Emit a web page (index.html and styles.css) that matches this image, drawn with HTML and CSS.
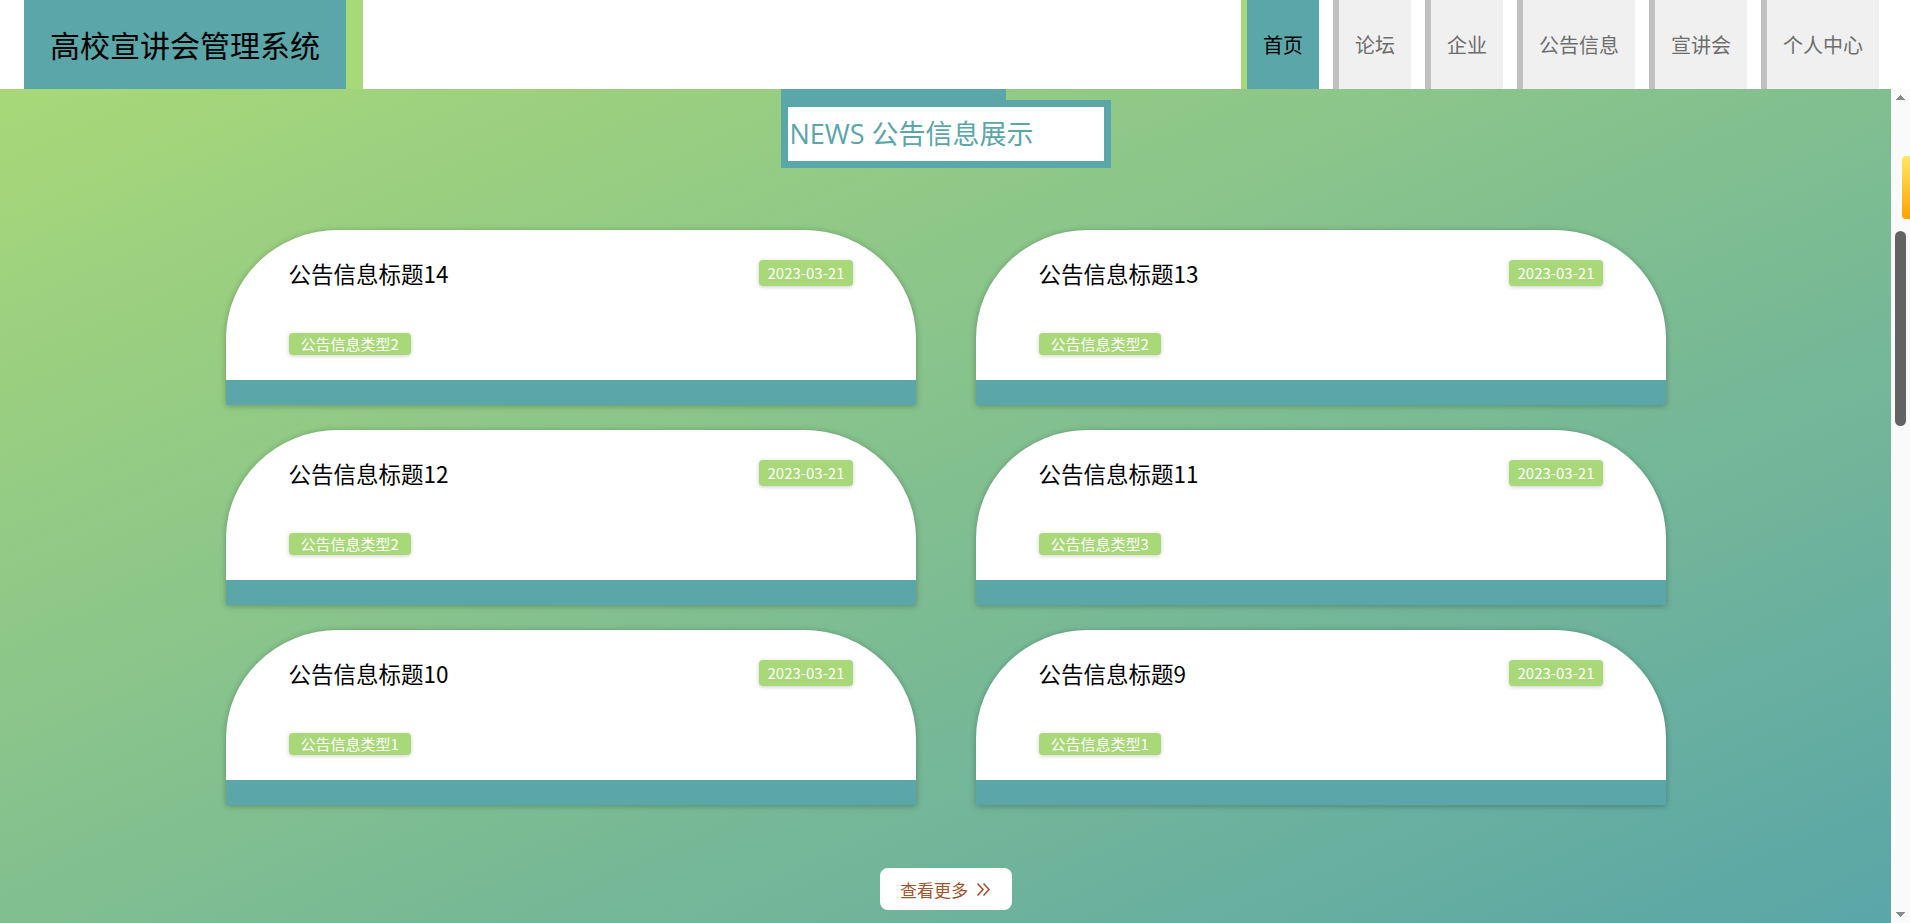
FILE: index.html
```html
<!DOCTYPE html>
<html lang="zh-CN">
  <head>
    <meta charset="UTF-8" />
    <meta name="viewport" content="width=device-width, initial-scale=1.0" />
    <title>高校宣讲会管理系统</title>
    <link rel="stylesheet" href="styles.css">
  </head>
  <body>
    <div class="app">
      <header class="topbar">
        <div class="logo">高校宣讲会管理系统</div>
        <nav class="menu">
          <a class="menu-item active" href="#">首页</a>
          <a class="menu-item" href="#">论坛</a>
          <a class="menu-item" href="#">企业</a>
          <a class="menu-item" href="#">公告信息</a>
          <a class="menu-item" href="#">宣讲会</a>
          <a class="menu-item" href="#">个人中心</a>
        </nav>
      </header>

      <div class="page-body">
        <main class="content">
          <section class="news">
            <div class="news-title">NEWS 公告信息展示</div>

            <div class="news-list">
              <div class="news-card">
                <div class="news-head">
                  <h3>公告信息标题14</h3>
                  <span class="news-date">2023-03-21</span>
                </div>
                <span class="news-type">公告信息类型2</span>
              </div>
              <div class="news-card">
                <div class="news-head">
                  <h3>公告信息标题13</h3>
                  <span class="news-date">2023-03-21</span>
                </div>
                <span class="news-type">公告信息类型2</span>
              </div>
              <div class="news-card">
                <div class="news-head">
                  <h3>公告信息标题12</h3>
                  <span class="news-date">2023-03-21</span>
                </div>
                <span class="news-type">公告信息类型2</span>
              </div>
              <div class="news-card">
                <div class="news-head">
                  <h3>公告信息标题11</h3>
                  <span class="news-date">2023-03-21</span>
                </div>
                <span class="news-type">公告信息类型3</span>
              </div>
              <div class="news-card">
                <div class="news-head">
                  <h3>公告信息标题10</h3>
                  <span class="news-date">2023-03-21</span>
                </div>
                <span class="news-type">公告信息类型1</span>
              </div>
              <div class="news-card">
                <div class="news-head">
                  <h3>公告信息标题9</h3>
                  <span class="news-date">2023-03-21</span>
                </div>
                <span class="news-type">公告信息类型1</span>
              </div>
            </div>

            <div class="news-more">
              <button class="more-btn">
                查看更多
                <svg width="15" height="15" viewBox="0 0 15 15" fill="none" stroke="currentColor" stroke-width="1.6">
                  <path d="M1.5 1.5l5.5 6-5.5 6M7.5 1.5l5.5 6-5.5 6" />
                </svg>
              </button>
            </div>
          </section>
        </main>

        <!-- полоса прокрутки -->
        <div class="scrollbar">
          <span class="scroll-arrow up"></span>
          <span class="scroll-thumb"></span>
          <span class="scroll-arrow down"></span>
        </div>
      </div>

      <div class="side-tab"></div>
    </div>
  </body>
</html>
```

FILE: styles.css
```css
/* Общие стили */
* {
  margin: 0;
  padding: 0;
  box-sizing: border-box;
}

body {
  font-family: "Noto Sans CJK SC", "Noto Sans", sans-serif;
  background-color: #fff;
  overflow: hidden;
}

.app {
  display: flex;
  flex-direction: column;
  height: 100vh;
}

/* Шапка */
.topbar {
  flex: none;
  height: 89px;
  display: flex;
  justify-content: space-between;
  padding: 0 31px 0 24px;
  background-color: #fff;
}

.logo {
  height: 100%;
  padding: 0 26px;
  background-color: #5aa6a8;
  border-right: 17px solid #a8d878;
  color: #000;
  font-size: 30px;
  line-height: 89px;
}

.menu {
  display: flex;
  gap: 14px;
  height: 100%;
}

.menu-item {
  display: block;
  height: 100%;
  padding: 0 16px;
  background-color: #f0f0f0;
  border-left: 6px solid #c0c0c0;
  color: #6e6e6e;
  font-size: 20px;
  line-height: 89px;
  text-decoration: none;
}

.menu-item.active {
  background-color: #5aa6a8;
  border-left-color: #a8d878;
  color: #000;
}

/* Основная область */
.page-body {
  flex: 1;
  display: flex;
  min-height: 0;
}

.content {
  flex: 1;
  overflow: hidden;
  background: linear-gradient(to bottom right, #a8d878, #5aa6a8);
}

.scrollbar {
  flex: none;
  width: 19px;
  display: flex;
  flex-direction: column;
  align-items: center;
  background-color: #fafafa;
}

.scroll-arrow {
  display: block;
  height: 17px;
  width: 100%;
  background-repeat: no-repeat;
  background-position: center;
  background-size: 9px 5px;
}

.scroll-arrow.up {
  background-image: conic-gradient(from 138deg at 50% 0, #8a8a8a 84deg, transparent 0);
}

.scroll-arrow.down {
  margin-top: auto;
  background-image: conic-gradient(from -42deg at 50% 100%, #8a8a8a 84deg, transparent 0);
}

.scroll-thumb {
  display: block;
  width: 11px;
  height: 195px;
  margin-top: 125px;
  border-radius: 6px;
  background-color: #636363;
}

/* Блок новостей */
.news {
  padding: 11px 0 40px;
}

.news-title {
  position: relative;
  width: 330px;
  height: 68px;
  margin: 0 auto;
  padding-left: 2px;
  background-color: #fff;
  border: 7px solid #5aa6a8;
  color: #5aa6a8;
  font-family: "Open Sans", "Noto Sans CJK SC", sans-serif;
  font-size: 27px;
  line-height: 54px;
  white-space: nowrap;
}

.news-title::before {
  content: "";
  position: absolute;
  left: -7px;
  top: -18px;
  width: 225px;
  height: 11px;
  background-color: #5aa6a8;
}

.news-list {
  width: 1440px;
  margin: 62px auto 0;
  display: grid;
  grid-template-columns: 1fr 1fr;
  column-gap: 60px;
  row-gap: 25px;
}

.news-card {
  height: 175px;
  padding: 30px 63px 0;
  background-color: #fff;
  border-radius: 112px 112px 0 0 / 108px 108px 0 0;
  border-bottom: 25px solid #5aa6a8;
  box-shadow: 0 1px 6px rgba(0, 0, 0, 0.28);
}

.news-head {
  display: flex;
  justify-content: space-between;
  align-items: center;
  height: 26px;
}

.news-head h3 {
  font-size: 22.5px;
  font-weight: normal;
  line-height: 26px;
  color: #000;
}

.news-date {
  padding: 0 8px;
  background-color: #a8d878;
  border-radius: 4px;
  color: #fff;
  font-size: 15px;
  line-height: 26px;
  box-shadow: 0 1px 4px rgba(0, 0, 0, 0.2);
}

.news-type {
  display: inline-block;
  margin-top: 47px;
  padding: 0 12px;
  background-color: #a8d878;
  border-radius: 4px;
  color: #fff;
  font-size: 15px;
  line-height: 22px;
  box-shadow: 0 1px 4px rgba(0, 0, 0, 0.2);
}

.news-more {
  margin-top: 63px;
  text-align: center;
}

.more-btn {
  display: inline-flex;
  align-items: center;
  justify-content: center;
  gap: 8px;
  width: 132px;
  height: 42px;
  border: none;
  border-radius: 8px;
  background-color: #fff;
  color: #a0522d;
  font-family: "Noto Sans CJK SC", sans-serif;
  font-size: 17px;
  cursor: pointer;
}

/* Боковая вкладка справа */
.side-tab {
  position: fixed;
  right: 0;
  top: 156px;
  width: 8px;
  height: 63px;
  border-radius: 4px 0 0 4px;
  background: linear-gradient(#ffe865, #ffa200);
}
```
